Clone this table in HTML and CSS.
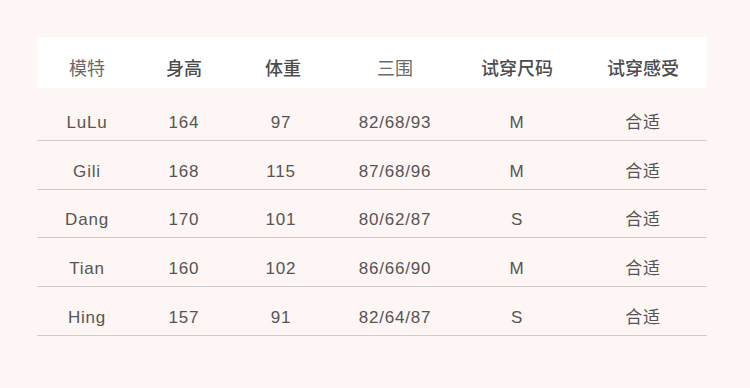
FILE: index.html
```html
<!DOCTYPE html>
<html lang="zh">
<head>
<meta charset="utf-8">
<link rel="stylesheet" href="styles.css">
</head>
<body>
<div class="sheet">
  <div class="row head">
    <div class="cell light">模特</div>
    <div class="cell strong">身高</div>
    <div class="cell strong">体重</div>
    <div class="cell light">三围</div>
    <div class="cell strong">试穿尺码</div>
    <div class="cell strong">试穿感受</div>
  </div>
  <div class="body">
    <div class="row data">
      <div class="cell">LuLu</div><div class="cell">164</div><div class="cell shift">97</div><div class="cell">82/68/93</div><div class="cell">M</div><div class="cell">合适</div>
    </div>
    <div class="row data">
      <div class="cell">Gili</div><div class="cell">168</div><div class="cell shift">115</div><div class="cell">87/68/96</div><div class="cell">M</div><div class="cell">合适</div>
    </div>
    <div class="row data">
      <div class="cell">Dang</div><div class="cell">170</div><div class="cell shift">101</div><div class="cell">80/62/87</div><div class="cell">S</div><div class="cell">合适</div>
    </div>
    <div class="row data">
      <div class="cell">Tian</div><div class="cell">160</div><div class="cell shift">102</div><div class="cell">86/66/90</div><div class="cell">M</div><div class="cell">合适</div>
    </div>
    <div class="row data">
      <div class="cell">Hing</div><div class="cell">157</div><div class="cell shift">91</div><div class="cell">82/64/87</div><div class="cell">S</div><div class="cell">合适</div>
    </div>
  </div>
</div>
</body>
</html>
```
FILE: styles.css
```css
html, body {
  margin: 0;
  padding: 0;
  background: #fdf6f4;
}
body {
  width: 750px;
  height: 388px;
  overflow: hidden;
}
.sheet {
  margin: 37px 0 0 37px;
  width: 670px;
}
.row {
  display: grid;
  grid-template-columns: 100px 94px 104px 120px 124px 128px;
  align-items: center;
  justify-items: center;
}
.head {
  background: #ffffff;
  height: 51px;
  box-sizing: border-box;
  padding-top: 8px;
  font-family: "Noto Sans CJK SC", sans-serif;
  font-size: 18px;
  line-height: 22px;
}
.head .light {
  color: #6a6a6a;
  font-weight: 400;
}
.head .strong {
  color: #4c4c4c;
  font-weight: 500;
}
.body {
  margin-top: 4px;
}
.data {
  height: 48.75px;
  box-sizing: border-box;
  padding-top: 14px;
  border-bottom: 1px solid #cfcccb;
  font-family: "Liberation Sans", "Noto Sans CJK SC", sans-serif;
  font-size: 17px;
  line-height: 20px;
  letter-spacing: 0.8px;
  color: #555;
}
.shift {
  margin-right: 4px;
}
```
